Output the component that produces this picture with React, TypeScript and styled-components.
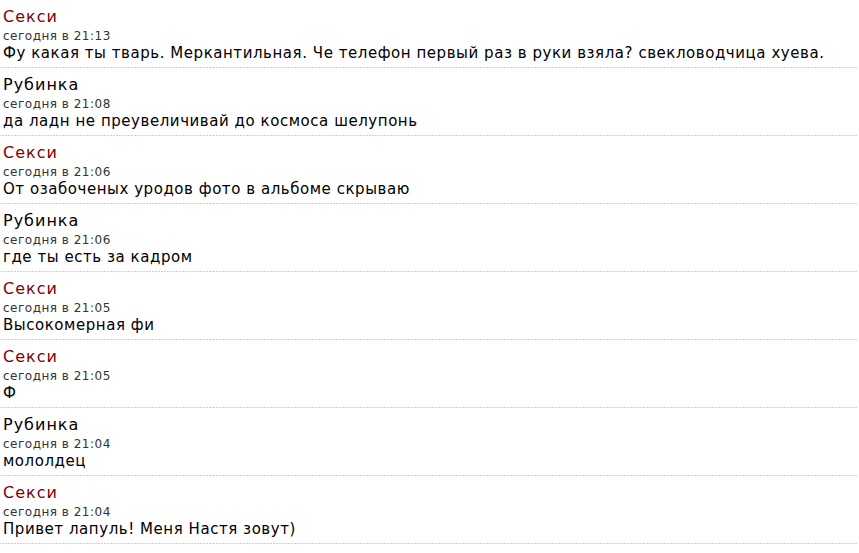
import React from "react";
import styled, { createGlobalStyle } from "styled-components";

const Global = createGlobalStyle`
  html, body { margin: 0; padding: 0; background: #fff; }
  body { font-family: "DejaVu Sans", Verdana, sans-serif; }
`;

const List = styled.div`
  width: 857px;
  display: flex;
  flex-direction: column;
`;

const Row = styled.div`
  display: flex;
  flex-direction: column;
  padding: 7px 3px 7px 3px;
  border-bottom: 1px solid transparent;
  border-image: repeating-linear-gradient(90deg, #cfcfcf 0 2px, #fff 2px 3px) 1;
`;

const Name = styled.div<{ $accent: boolean }>`
  font-size: 16px;
  letter-spacing: 1px;
  line-height: 20px;
  color: ${(p) => (p.$accent ? "#800000" : "#000")};
`;

const Time = styled.div`
  margin-top: 1px;
  font-size: 12px;
  letter-spacing: 0.5px;
  line-height: 16px;
  color: #333;
`;

const Text = styled.div`
  margin-top: 2px;
  font-size: 15px;
  letter-spacing: 0.55px;
  line-height: 14px;
  color: #000;
  white-space: nowrap;
`;

const messages = [
  { name: "Секси", accent: true, time: "сегодня в 21:13", text: "Фу какая ты тварь. Меркантильная. Че телефон первый раз в руки взяла? свекловодчица хуева." },
  { name: "Рубинка", accent: false, time: "сегодня в 21:08", text: "да ладн не преувеличивай до космоса шелупонь" },
  { name: "Секси", accent: true, time: "сегодня в 21:06", text: "От озабоченых уродов фото в альбоме скрываю" },
  { name: "Рубинка", accent: false, time: "сегодня в 21:06", text: "где ты есть за кадром" },
  { name: "Секси", accent: true, time: "сегодня в 21:05", text: "Высокомерная фи" },
  { name: "Секси", accent: true, time: "сегодня в 21:05", text: "Ф" },
  { name: "Рубинка", accent: false, time: "сегодня в 21:04", text: "мололдец" },
  { name: "Секси", accent: true, time: "сегодня в 21:04", text: "Привет лапуль! Меня Настя зовут)" },
];

export default function App() {
  return (
    <>
      <Global />
      <List>
        {messages.map((m, i) => (
          <Row key={i}>
            <Name $accent={m.accent}>{m.name}</Name>
            <Time>{m.time}</Time>
            <Text>{m.text}</Text>
          </Row>
        ))}
      </List>
    </>
  );
}
